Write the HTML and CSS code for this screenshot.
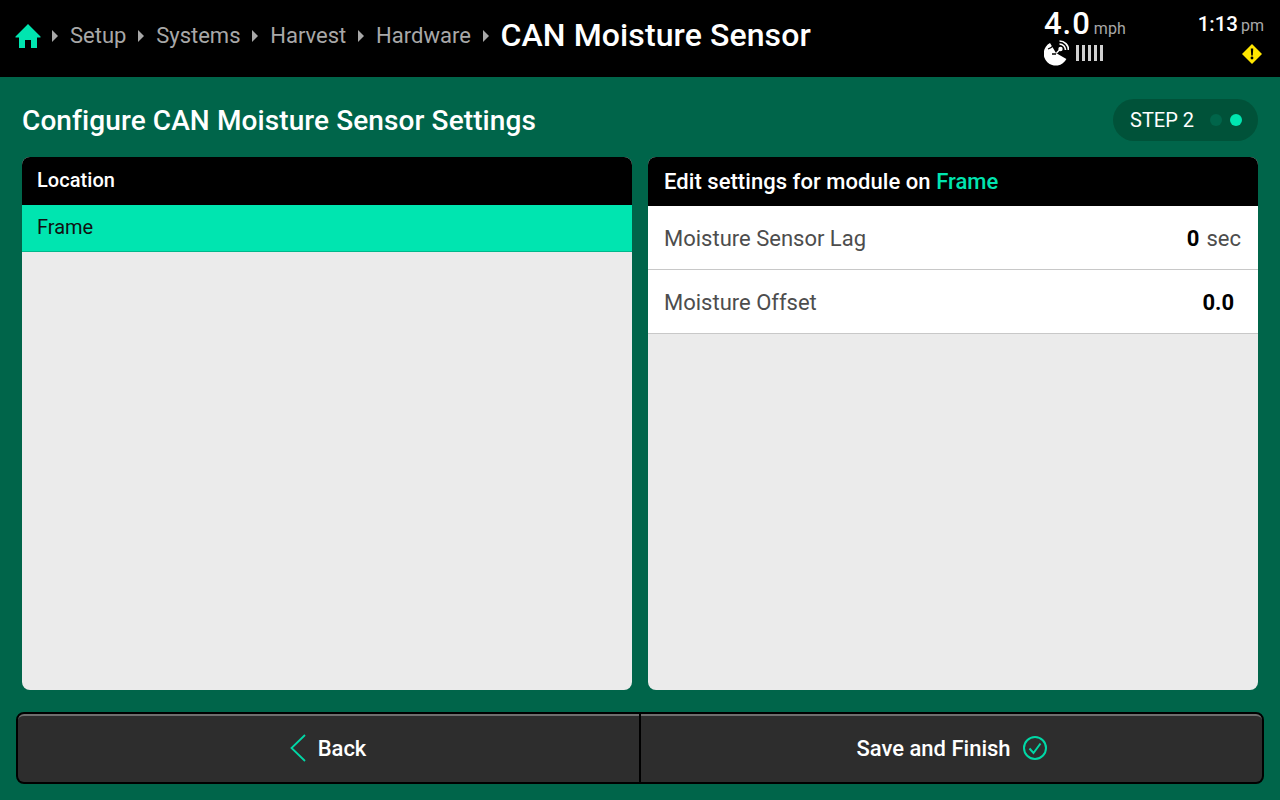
FILE: index.html
```html
<!DOCTYPE html>
<html lang="en">
<head>
    <meta charset="UTF-8">
    <title>CAN Moisture Sensor</title>
    <link rel="stylesheet" href="styles.css">
</head>
<body>
    <header class="topbar">
        <nav class="crumbs">
            <svg class="home" width="26" height="26" viewBox="0 0 26 26">
                <path d="M13 1 L25.5 13.5 V14.5 H22 V25 H16 V17 H10 V25 H4 V14.5 H0.5 V13.5 Z" fill="#00e5b0"/>
            </svg>
            <span class="sep"></span>
            <span class="crumb">Setup</span>
            <span class="sep"></span>
            <span class="crumb">Systems</span>
            <span class="sep"></span>
            <span class="crumb">Harvest</span>
            <span class="sep"></span>
            <span class="crumb">Hardware</span>
            <span class="sep"></span>
            <span class="crumb-current">CAN Moisture Sensor</span>
        </nav>
        <div class="status">
            <div class="status-left">
                <div class="speed"><span class="speed-value">4.0</span><span class="unit">mph</span></div>
                <div class="signal">
                    <svg width="25" height="26" viewBox="0 0 25 26">
                        <path d="M6 3 A12 12 0 1 0 22.4 19 L12 13 Z" fill="#fff"/>
                        <circle cx="16.5" cy="9" r="2.2" fill="#fff"/>
                        <path d="M12.5 13 L16.5 9" stroke="#fff" stroke-width="1.4"/>
                        <path d="M15.5 4 A6 6 0 0 1 21.5 10 M15.5 1 A9 9 0 0 1 24.5 10" stroke="#fff" stroke-width="1.7" fill="none"/>
                        <path d="M4 9 Q7 8 9 6 M8 14 L12 14" stroke="#000" stroke-width="1.3" fill="none"/>
                    </svg>
                    <div class="bars"><i></i><i></i><i></i><i></i><i></i></div>
                </div>
            </div>
            <div class="status-right">
                <div class="clock"><span class="clock-value">1:13</span><span class="unit">pm</span></div>
                <svg class="warn" width="20" height="20" viewBox="0 0 20 20">
                    <path d="M10 0 L20 10 L10 20 L0 10 Z" fill="#ffe600"/>
                    <path d="M8.8 4.5 H11.2 L10.8 11.5 H9.2 Z" fill="#000"/>
                    <circle cx="10" cy="14" r="1.4" fill="#000"/>
                </svg>
            </div>
        </div>
    </header>

    <main class="content">
        <div class="title-row">
            <h1>Configure CAN Moisture Sensor Settings</h1>
            <div class="step">
                <span class="step-label">STEP 2</span>
                <span class="dot"></span>
                <span class="dot dot-on"></span>
            </div>
        </div>

        <div class="panels">
            <section class="panel">
                <h2 class="panel-head panel-head-left">Location</h2>
                <div class="location-row">Frame</div>
            </section>
            <section class="panel">
                <h2 class="panel-head">Edit settings for module on <span class="accent">Frame</span></h2>
                <div class="setting-row">
                    <span class="setting-name">Moisture Sensor Lag</span>
                    <span class="setting-value"><b>0</b><span class="setting-unit">sec</span></span>
                </div>
                <div class="setting-row">
                    <span class="setting-name">Moisture Offset</span>
                    <span class="setting-value setting-value-plain"><b>0.0</b></span>
                </div>
            </section>
        </div>
    </main>

    <footer class="actions">
        <button class="action action-back">
            <svg width="16" height="28" viewBox="0 0 16 28">
                <path d="M15 1 L1.5 14 L15 27" stroke="#00d8a6" stroke-width="1.8" fill="none"/>
            </svg>
            Back
        </button>
        <button class="action">
            Save and Finish
            <svg width="24" height="24" viewBox="0 0 24 24">
                <circle cx="12" cy="12" r="11" stroke="#00d8a6" stroke-width="2" fill="none"/>
                <path d="M6.5 12.5 L10.5 17 L17.5 7.5" stroke="#00d8a6" stroke-width="2" fill="none"/>
            </svg>
        </button>
    </footer>
</body>
</html>
```

FILE: styles.css
```css
* {
    box-sizing: border-box;
}

body {
    margin: 0;
    width: 1280px;
    height: 800px;
    overflow: hidden;
    display: flex;
    flex-direction: column;
    font-family: Roboto, "Liberation Sans", sans-serif;
    background: #00654a;
    color: #fff;
}

.topbar {
    height: 77px;
    background: #000;
    display: flex;
    justify-content: space-between;
    padding-left: 15px;
}

.crumbs {
    display: flex;
    align-items: center;
    height: 71px;
}

.home {
    margin-right: 11px;
}

.sep {
    width: 0;
    height: 0;
    border-left: 6px solid #a8a8a8;
    border-top: 6px solid transparent;
    border-bottom: 6px solid transparent;
    margin-right: 12px;
}

.crumb {
    font-size: 22px;
    color: #a8a8a8;
    margin-right: 11.75px;
}

.crumb-current {
    font-size: 32px;
    font-weight: 500;
    letter-spacing: 0.1px;
    padding-bottom: 2px;
}

.status {
    display: flex;
    padding-right: 16px;
}

.status-left {
    width: 154px;
    padding-top: 7px;
}

.status-right {
    width: 66px;
    padding-top: 12px;
    display: flex;
    flex-direction: column;
    align-items: flex-end;
}

.speed,
.clock {
    display: flex;
    align-items: baseline;
}

.speed-value {
    font-size: 31px;
    font-weight: 500;
    line-height: 33px;
    letter-spacing: 1px;
}

.clock-value {
    font-size: 20.5px;
    font-weight: 500;
    line-height: 24px;
}

.unit {
    font-size: 16px;
    color: #a8a8a8;
    margin-left: 3px;
}

.signal {
    display: flex;
    align-items: center;
    gap: 7px;
}

.bars {
    display: flex;
    gap: 3px;
}

.bars i {
    display: block;
    width: 3px;
    height: 16px;
    background: #d0d0d0;
}

.warn {
    margin-top: 8px;
    margin-right: 2px;
}

.content {
    flex: 1;
    display: flex;
    flex-direction: column;
    padding: 0 22px;
}

.title-row {
    height: 80px;
    display: flex;
    align-items: center;
    justify-content: space-between;
    padding-top: 6px;
}

h1 {
    margin: 0;
    font-size: 28px;
    font-weight: 500;
    letter-spacing: 0.1px;
}

.step {
    height: 42px;
    width: 145px;
    border-radius: 21px;
    background: #005239;
    display: flex;
    align-items: center;
    padding-left: 17px;
}

.step-label {
    font-size: 20px;
    margin-right: 16px;
}

.dot {
    width: 12px;
    height: 12px;
    border-radius: 50%;
    background: #00654a;
    margin-right: 8px;
}

.dot-on {
    background: #00e5b0;
}

.panels {
    height: 533px;
    display: grid;
    grid-template-columns: 610px 610px;
    gap: 16px;
}

.panel {
    background: #ebebeb;
    border-radius: 8px;
    overflow: hidden;
}

.panel-head {
    margin: 0;
    height: 49px;
    background: #000;
    padding-left: 16px;
    display: flex;
    align-items: center;
    font-size: 22px;
    font-weight: 500;
    letter-spacing: 0.05px;
    white-space: pre;
}

.panel-head-left {
    height: 48px;
    padding: 0 0 2px 15px;
    font-size: 20px;
}

.accent {
    color: #00e5b0;
}

.location-row {
    height: 47px;
    background: #00e5b0;
    border-bottom: 1px solid #00b88c;
    color: #111;
    font-size: 20px;
    padding: 0 0 2px 15px;
    display: flex;
    align-items: center;
}

.setting-row {
    height: 64px;
    background: #fff;
    border-bottom: 1px solid #c8c8c8;
    display: flex;
    align-items: center;
    justify-content: space-between;
    padding: 2px 17px 0 16px;
}

.setting-name {
    font-size: 22px;
    color: #4d4d4d;
}

.setting-value {
    font-size: 22px;
    color: #4d4d4d;
}

.setting-value b {
    color: #000;
    font-weight: 700;
}

.setting-value-plain {
    padding-right: 7px;
}

.setting-unit {
    margin-left: 7px;
}

.actions {
    height: 72px;
    margin: 0 16px 16px;
    display: flex;
    border: 2px solid #000;
    border-radius: 8px;
    background: #000;
    gap: 2px;
}

.action {
    flex: 1;
    border: 0;
    border-top: 2px solid #6e6e6e;
    background: #2d2d2d;
    color: #fff;
    font-family: inherit;
    font-size: 22px;
    font-weight: 500;
    display: flex;
    align-items: center;
    justify-content: center;
    gap: 12px;
    padding: 0 0 2px;
}

.action-back svg {
    margin-left: -1px;
}

.action:first-child {
    border-radius: 6px 0 0 6px;
}

.action:last-child {
    border-radius: 0 6px 6px 0;
}
```
